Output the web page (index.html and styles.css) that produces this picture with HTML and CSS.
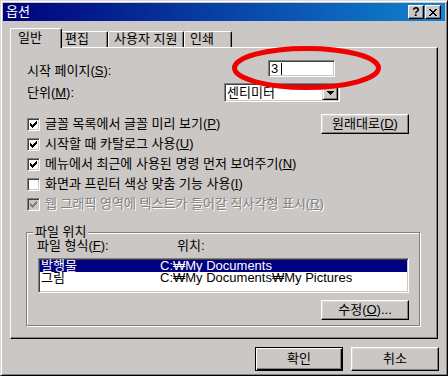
FILE: index.html
```html
<!DOCTYPE html>
<html lang="ko">
<head>
  <meta charset="UTF-8">
  <title>옵션</title>
  <link rel="stylesheet" href="styles.css">
</head>
<body>

  <div class="window">
    <div class="titlebar">
      <span class="title">옵션</span>
      <div class="caption-btns">
        <span class="cap-btn help">?</span>
        <span class="cap-btn close">
          <svg width="8" height="7" viewBox="0 0 8 7" shape-rendering="crispEdges">
            <path d="M0 0h2v1h-2zM6 0h2v1h-2zM1 1h2v1h-2zM5 1h2v1h-2zM2 2h4v1h-4zM3 3h2v1h-2zM2 4h4v1h-4zM1 5h2v1h-2zM5 5h2v1h-2zM0 6h2v1h-2zM6 6h2v1h-2z" fill="#000"/>
          </svg>
        </span>
      </div>
    </div>

    <div class="body">
      <div class="tabs">
        <div class="tab active">일반</div>
        <div class="tab tab-edit">편집</div>
        <div class="tab tab-help">사용자 지원</div>
        <div class="tab tab-print">인쇄</div>
      </div>

      <div class="panel">
        <div class="field-row start-row">
          <label class="lbl lbl-start">시작 페이지(<u>S</u>):</label>
          <div class="textbox">3<span class="caret"></span></div>
        </div>

        <div class="field-row unit-row">
          <label class="lbl lbl-unit">단위(<u>M</u>):</label>
          <div class="select">
            <span class="select-value">센티미터</span>
            <span class="select-btn">
              <svg width="7" height="4" viewBox="0 0 7 4" shape-rendering="crispEdges">
                <path d="M0 0h7v1h-7zM1 1h5v1h-5zM2 2h3v1h-3zM3 3h1v1h-1z" fill="#000"/>
              </svg>
            </span>
          </div>
        </div>

        <div class="checks">
          <div class="check-row">
            <span class="checkbox"><svg width="7" height="7" viewBox="0 0 7 7" shape-rendering="crispEdges"><path d="M6 0h1v1h-1zM5 1h2v1h-2zM0 2h1v1h-1zM4 2h3v1h-3zM0 3h2v1h-2zM3 3h3v1h-3zM0 4h5v1h-5zM1 5h3v1h-3zM2 6h1v1h-1z"/></svg></span>
            <span class="check-text">글꼴 목록에서 글꼴 미리 보기(<u>P</u>)</span>
            <button class="btn btn-reset">원래대로(<u>D</u>)</button>
          </div>
          <div class="check-row">
            <span class="checkbox"><svg width="7" height="7" viewBox="0 0 7 7" shape-rendering="crispEdges"><path d="M6 0h1v1h-1zM5 1h2v1h-2zM0 2h1v1h-1zM4 2h3v1h-3zM0 3h2v1h-2zM3 3h3v1h-3zM0 4h5v1h-5zM1 5h3v1h-3zM2 6h1v1h-1z"/></svg></span>
            <span class="check-text">시작할 때 카탈로그 사용(<u>U</u>)</span>
          </div>
          <div class="check-row">
            <span class="checkbox"><svg width="7" height="7" viewBox="0 0 7 7" shape-rendering="crispEdges"><path d="M6 0h1v1h-1zM5 1h2v1h-2zM0 2h1v1h-1zM4 2h3v1h-3zM0 3h2v1h-2zM3 3h3v1h-3zM0 4h5v1h-5zM1 5h3v1h-3zM2 6h1v1h-1z"/></svg></span>
            <span class="check-text">메뉴에서 최근에 사용된 명령 먼저 보여주기(<u>N</u>)</span>
          </div>
          <div class="check-row">
            <span class="checkbox"></span>
            <span class="check-text">화면과 프린터 색상 맞춤 기능 사용(<u>I</u>)</span>
          </div>
          <div class="check-row disabled">
            <span class="checkbox"><svg width="7" height="7" viewBox="0 0 7 7" shape-rendering="crispEdges"><path d="M6 0h1v1h-1zM5 1h2v1h-2zM0 2h1v1h-1zM4 2h3v1h-3zM0 3h2v1h-2zM3 3h3v1h-3zM0 4h5v1h-5zM1 5h3v1h-3zM2 6h1v1h-1z"/></svg></span>
            <span class="check-text">웹 그래픽 영역에 텍스트가 들어갈 직사각형 표시(<u>R</u>)</span>
          </div>
        </div>

        <fieldset class="group">
          <legend>파일 위치</legend>
          <div class="group-inner">
            <div class="col-heads">
              <span class="head-type">파일 형식(<u>F</u>):</span>
              <span>위치:</span>
            </div>
            <div class="listbox">
              <div class="list-item selected"><span class="col-type">발행물</span><span>C:₩My Documents</span></div>
              <div class="list-item"><span class="col-type">그림</span><span>C:₩My Documents₩My Pictures</span></div>
            </div>
            <div class="group-foot">
              <button class="btn">수정(<u>O</u>)...</button>
            </div>
          </div>
        </fieldset>
      </div>

      <div class="actions">
        <button class="btn btn-default">확인</button>
        <button class="btn">취소</button>
      </div>
    </div>

    <svg class="ink-mark" width="154" height="50" viewBox="0 0 154 50">
      <ellipse cx="76.5" cy="24" rx="72" ry="19.5" fill="none" stroke="#f00000" stroke-width="5"/>
    </svg>
  </div>

</body>
</html>
```

FILE: styles.css
```css
* {
  box-sizing: border-box;
}

body {
  margin: 0;
  font-family: "Liberation Sans", "Noto Sans CJK KR", sans-serif;
  font-size: 13px;
  line-height: 14px;
  color: #000;
}

.window {
  position: relative;
  width: 448px;
  height: 376px;
  padding: 2px;
  background-color: #cbc7c4;
  border: 1px solid;
  border-color: #dcd8d4 #000 #000 #dcd8d4;
  box-shadow: inset 1px 1px #fff, inset -1px -1px #808080;
}

/* title bar */
.titlebar {
  height: 18px;
  display: flex;
  align-items: center;
  justify-content: space-between;
  padding: 0 4px 0 3px;
  background: linear-gradient(to right, #00007b, #1084d0);
  color: #fff;
}

.caption-btns {
  display: flex;
}

.cap-btn {
  width: 16px;
  height: 14px;
  display: flex;
  align-items: center;
  justify-content: center;
  background-color: #cbc7c4;
  color: #000;
  border: 1px solid;
  border-color: #fff #000 #000 #fff;
  box-shadow: inset -1px -1px #808080;
  font-weight: bold;
  font-size: 12px;
  line-height: 12px;
}

.cap-btn.close {
  margin-left: 1px;
}

/* tabs */
.body {
  padding: 7px 0 0 7px;
}

.tabs {
  display: flex;
  align-items: flex-end;
  height: 19px;
}

.tab {
  height: 16px;
  padding: 0 0 0 5px;
  line-height: 13px;
  border-left: 1px solid #fff;
  border-top: 1px solid #fff;
  border-right: 1px solid #000;
  border-radius: 2px 2px 0 0;
  box-shadow: inset -1px 0 #808080;
  background-color: #cbc7c4;
}

.tab.active {
  position: relative;
  z-index: 2;
  width: 52px;
  height: 20px;
  margin-bottom: -1px;
  margin-right: -3px;
  padding: 2px 0 0 7px;
  line-height: 14px;
}

.tab-edit {
  width: 49px;
}

.tab-help {
  width: 76px;
}

.tab-print {
  width: 48px;
}

/* panel */
.panel {
  position: relative;
  width: 428px;
  height: 292px;
  padding: 12px 28px 0 16px;
  border: 1px solid;
  border-color: #fff #000 #000 #fff;
  box-shadow: inset -1px -1px #808080;
}

.field-row {
  display: flex;
  align-items: center;
}

.start-row {
  height: 17px;
}

.unit-row {
  height: 19px;
  margin-top: 6px;
}

.lbl-start {
  width: 241px;
  margin-top: 5px;
}

.lbl-unit {
  width: 197px;
}

.textbox {
  width: 67px;
  height: 17px;
  display: flex;
  align-items: center;
  padding-left: 2px;
  background-color: #fff;
  border: 1px solid;
  border-color: #808080 #fff #fff #808080;
  box-shadow: inset 1px 1px #404040, inset -1px -1px #cbc7c4;
}

.caret {
  width: 1px;
  height: 12px;
  margin-left: 3px;
  background-color: #000;
}

.select {
  width: 116px;
  height: 19px;
  display: flex;
  align-items: center;
  justify-content: space-between;
  padding: 1px;
  background-color: #fff;
  border: 1px solid;
  border-color: #808080 #fff #fff #808080;
  box-shadow: inset 1px 1px #404040, inset -1px -1px #cbc7c4;
}

.select-value {
  padding-left: 1px;
}

.select-btn {
  width: 16px;
  height: 15px;
  display: flex;
  align-items: center;
  justify-content: center;
  background-color: #cbc7c4;
  border: 1px solid;
  border-color: #dcd8d4 #000 #000 #dcd8d4;
  box-shadow: inset 1px 1px #fff, inset -1px -1px #808080;
}

/* check list */
.checks {
  margin-top: 12px;
}

.check-row {
  height: 20px;
  display: flex;
  align-items: center;
}

.checkbox {
  width: 13px;
  height: 13px;
  display: flex;
  align-items: center;
  justify-content: center;
  margin-right: 5px;
  background-color: #fff;
  border: 1px solid;
  border-color: #808080 #fff #fff #808080;
  box-shadow: inset 1px 1px #404040, inset -1px -1px #cbc7c4;
}

.checkbox svg {
  fill: #000;
}

.disabled .checkbox {
  background-color: #cbc7c4;
}

.disabled .checkbox svg {
  fill: #808080;
}

.disabled .check-text {
  color: #808080;
  text-shadow: 1px 1px #fff;
}

/* buttons */
.btn {
  width: 88px;
  height: 20px;
  padding: 0;
  font: inherit;
  color: #000;
  background-color: #cbc7c4;
  border: 1px solid;
  border-color: #fff #000 #000 #fff;
  box-shadow: inset -1px -1px #808080, inset 1px 1px #dcd8d4;
}

.btn-reset {
  margin-left: auto;
}

.btn-default {
  border-color: #000;
  box-shadow: inset 1px 1px #fff, inset -1px -1px #000, inset -2px -2px #808080;
}

/* file location group */
.group {
  width: 394px;
  height: 101px;
  margin: 11px 0 0 -1px;
  padding: 0;
  border: 1px solid #808080;
  box-shadow: inset 1px 1px #fff, 1px 1px #fff;
}

.group legend {
  margin-left: 6px;
  padding: 0 2px;
  background-color: #cbc7c4;
  line-height: 14px;
}

.group-inner {
  padding: 0 0 0 10px;
}

.col-heads {
  display: flex;
}

.head-type {
  width: 140px;
}

.listbox {
  width: 371px;
  height: 35px;
  margin: 5px 0 0 1px;
  padding-top: 1px;
  background-color: #fff;
  border: 1px solid;
  border-color: #808080 #fff #fff #808080;
  box-shadow: inset 1px 1px #404040, inset -1px -1px #cbc7c4;
}

.list-item {
  height: 12px;
  margin: 0 1px;
  display: flex;
  align-items: center;
  line-height: 12px;
}

.list-item.selected {
  background-color: #000080;
  color: #fff;
}

.col-type {
  width: 120px;
  padding-left: 1px;
}

.group-foot {
  display: flex;
  justify-content: flex-end;
  width: 372px;
  margin-top: 7px;
}

/* dialog buttons */
.actions {
  display: flex;
  justify-content: flex-end;
  gap: 8px;
  padding-right: 6px;
  margin-top: 8px;
}

.actions .btn {
  height: 24px;
}

/* red hand-drawn mark over the start page box */
.ink-mark {
  position: absolute;
  left: 229px;
  top: 43px;
}
```
